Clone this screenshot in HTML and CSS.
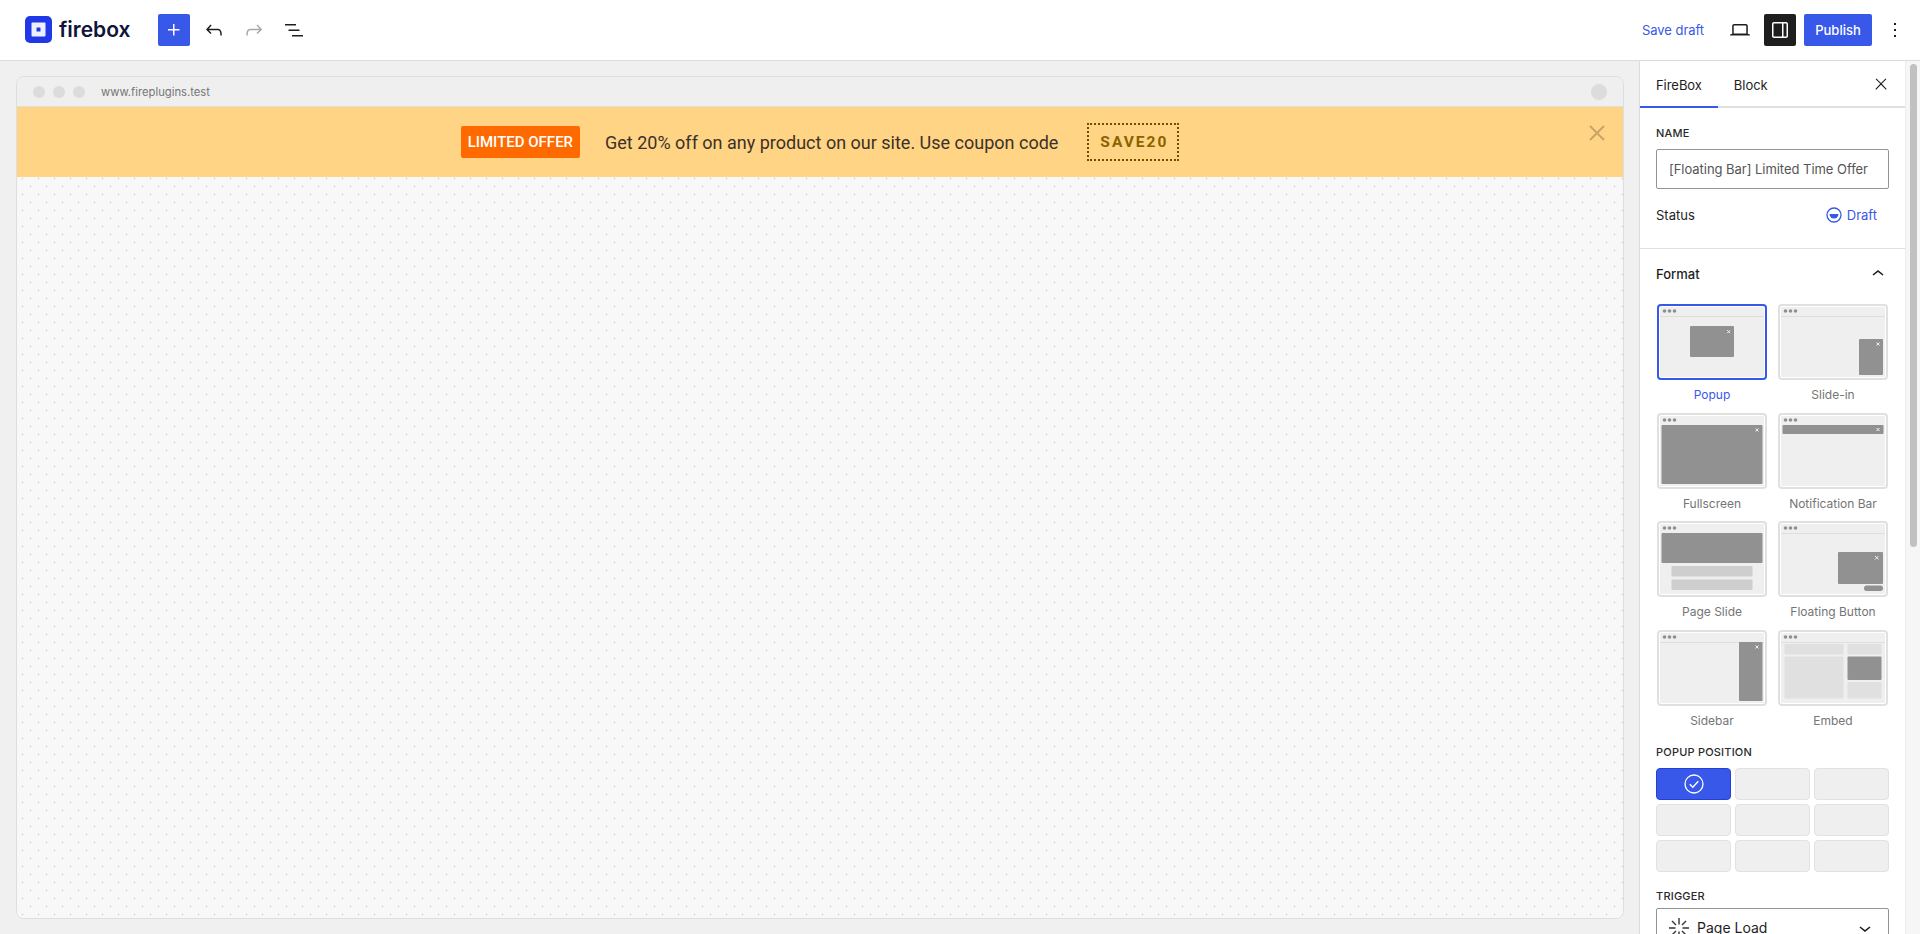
FILE: index.html
```html
<!DOCTYPE html>
<html lang="en">
<head>
<meta charset="utf-8">
<title>FireBox</title>
<link rel="stylesheet" href="styles.css">
</head>
<body>
<header class="topbar">
  <div class="brand">
    <svg class="brand-mark" viewBox="0 0 27 27"><rect width="27" height="27" rx="5" fill="#2138e8"/><rect x="6.500" y="6.500" width="14" height="14" rx="1" fill="#eef0fe"/><rect x="11.500" y="11.500" width="4" height="4" rx=".5" fill="#2138e8"/></svg>
    <span class="brand-name">firebox</span>
  </div>
  <div class="tools">
    <button class="icon-btn primary"><svg viewBox="0 0 24 24"><path d="M11 12.500V17.500H12.500V12.500H17.500V11H12.500V6H11V11H6V12.500H11Z"/></svg></button>
    <button class="icon-btn"><svg viewBox="0 0 24 24"><path d="M18.300 11.700c-.6-.6-1.400-.9-2.300-.9H6.700l2.900-3.300-1.100-1-4.500 5L8.500 16l1-1-2.700-2.700H16c.5 0 .9.200 1.300.5 1 1 1 3.400 1 4.500v.3h1.500v-.2c0-1.500 0-4.300-1.500-5.700z"/></svg></button>
    <button class="icon-btn muted"><svg viewBox="0 0 24 24"><path d="M15.600 6.500l-1.100 1 2.900 3.300H8c-.9 0-1.700.3-2.300.9-1.400 1.500-1.400 4.200-1.400 5.600v.2h1.500v-.3c0-1.100 0-3.500 1-4.500.3-.3.7-.5 1.300-.5h9.200L14.500 15l1.100 1.100 4.600-4.600-4.600-5z"/></svg></button>
    <button class="icon-btn"><svg viewBox="0 0 24 24"><path d="M3 6h11v1.500H3V6Zm3.500 5.500h11V13h-11v-1.500ZM21 17H10v1.500h11V17Z"/></svg></button>
  </div>
  <div class="actions">
    <span class="save-draft">Save draft</span>
    <button class="icon-btn laptop"><svg viewBox="0 0 24 24"><path d="M20.500 16h-.7V8c0-1.100-.9-2-2-2H6.200c-1.100 0-2 .9-2 2v8h-.7c-.8 0-1.500.7-1.500 1.500h20c0-.8-.7-1.500-1.500-1.500zM5.700 8c0-.3.2-.5.5-.5h11.600c.3 0 .5.2.5.5v7.600H5.700V8z"/></svg></button>
    <button class="icon-btn dark"><svg viewBox="0 0 24 24"><path d="M18 4H6c-1.100 0-2 .9-2 2v12c0 1.100.9 2 2 2h12c1.100 0 2-.9 2-2V6c0-1.100-.9-2-2-2zm-4 14.500H6c-.3 0-.5-.2-.5-.5V6c0-.3.2-.5.5-.5h8v13zm4.500-.5c0 .3-.2.5-.5.5h-2.500v-13H18c.3 0 .5.2.5.5v12z"/></svg></button>
    <button class="publish">Publish</button>
    <button class="icon-btn more"><svg viewBox="0 0 24 24"><path d="M13 19h-2v-2h2v2zm0-6h-2v-2h2v2zm0-6h-2V5h2v2z"/></svg></button>
  </div>
</header>

<div class="workspace">
  <main class="stage">
    <section class="frame">
      <div class="chrome">
        <span class="light"></span><span class="light"></span><span class="light"></span>
        <span class="url">www.fireplugins.test</span>
        <span class="light end"></span>
      </div>
      <div class="banner">
        <span class="offer">LIMITED OFFER</span>
        <span class="pitch">Get 20% off on any product on our site. Use coupon code</span>
        <span class="coupon">SAVE20</span>
        <svg class="banner-close" viewBox="0 0 16 16"><path d="M1 1l14 14M15 1L1 15"/></svg>
      </div>
      <div class="canvas"></div>
    </section>
  </main>

  <aside class="sidebar">
    <div class="panel">
      <div class="tabs">
        <span class="tab active">FireBox</span>
        <span class="tab">Block</span>
        <svg class="tab-close" viewBox="0 0 24 24"><path d="M13 11.800l6.100-6.300-1-1-6.100 6.200-6.100-6.200-1 1 6.100 6.300-6.500 6.700 1 1 6.500-6.600 6.500 6.600 1-1z"/></svg>
      </div>

      <div class="section meta">
        <label class="caps">Name</label>
        <div class="field name-field">[Floating Bar] Limited Time Offer</div>
        <div class="status-row">
          <span>Status</span>
          <span class="status"><svg viewBox="0 0 16 16"><circle cx="8" cy="8" r="7" fill="none" stroke="#3858e9" stroke-width="1.300"/><path d="M3.500 7h9a4.500 4.500 0 0 1-9 0Z" fill="#3858e9"/></svg>Draft</span>
        </div>
      </div>

      <div class="section format">
        <div class="section-head">
          <span>Format</span>
          <svg viewBox="0 0 24 24"><path d="M6.500 12.400L12 8l5.500 4.400-.9 1.200L12 10l-4.500 3.600-1-1.200z"/></svg>
        </div>

        <div class="thumbs">
          <figure class="thumb selected">
            <svg viewBox="0 0 110 76"><rect class="frame-line" x="1" y="1" width="108" height="74" rx="3"/><rect class="inner" x="3" y="3" width="104" height="70" rx="1"/><path class="rule" d="M3 12.500h104"/><circle class="dot" cx="7.500" cy="7" r="1.800"/><circle class="dot" cx="12.500" cy="7" r="1.800"/><circle class="dot" cx="17.500" cy="7" r="1.800"/><rect class="block" x="33" y="22" width="44" height="31" rx="1"/><path class="x" d="M70.200 26.200l3 3M73.200 26.200l-3 3"/></svg>
            <figcaption>Popup</figcaption>
          </figure>
          <figure class="thumb">
            <svg viewBox="0 0 110 76"><rect class="frame-line" x="1" y="1" width="108" height="74" rx="3"/><rect class="inner" x="3" y="3" width="104" height="70" rx="1"/><path class="rule" d="M3 12.500h104"/><circle class="dot" cx="7.500" cy="7" r="1.800"/><circle class="dot" cx="12.500" cy="7" r="1.800"/><circle class="dot" cx="17.500" cy="7" r="1.800"/><rect class="block" x="81" y="35" width="24" height="36" rx="1"/><path class="x" d="M98.500 38.500l3 3M101.500 38.500l-3 3"/></svg>
            <figcaption>Slide-in</figcaption>
          </figure>
          <figure class="thumb">
            <svg viewBox="0 0 110 76"><rect class="frame-line" x="1" y="1" width="108" height="74" rx="3"/><rect class="inner" x="3" y="3" width="104" height="70" rx="1"/><circle class="dot" cx="7.500" cy="7" r="1.800"/><circle class="dot" cx="12.500" cy="7" r="1.800"/><circle class="dot" cx="17.500" cy="7" r="1.800"/><rect class="block" x="4.500" y="12" width="101" height="59" rx="1"/><path class="x" d="M98.500 15.500l3 3M101.500 15.500l-3 3"/></svg>
            <figcaption>Fullscreen</figcaption>
          </figure>
          <figure class="thumb">
            <svg viewBox="0 0 110 76"><rect class="frame-line" x="1" y="1" width="108" height="74" rx="3"/><rect class="inner" x="3" y="3" width="104" height="70" rx="1"/><circle class="dot" cx="7.500" cy="7" r="1.800"/><circle class="dot" cx="12.500" cy="7" r="1.800"/><circle class="dot" cx="17.500" cy="7" r="1.800"/><rect class="block" x="4.500" y="12" width="101" height="9" rx="1"/><path class="x" d="M98.500 15l3 3M101.500 15l-3 3"/></svg>
            <figcaption>Notification Bar</figcaption>
          </figure>
          <figure class="thumb">
            <svg viewBox="0 0 110 76"><rect class="frame-line" x="1" y="1" width="108" height="74" rx="3"/><rect class="inner" x="3" y="3" width="104" height="70" rx="1"/><circle class="dot" cx="7.500" cy="7" r="1.800"/><circle class="dot" cx="12.500" cy="7" r="1.800"/><circle class="dot" cx="17.500" cy="7" r="1.800"/><rect class="block" x="4.500" y="12" width="101" height="30" rx="1"/><rect class="soft" x="14.500" y="45" width="81" height="10.500" rx="1"/><rect class="soft" x="14.500" y="58.500" width="81" height="10.500" rx="1"/></svg>
            <figcaption>Page Slide</figcaption>
          </figure>
          <figure class="thumb">
            <svg viewBox="0 0 110 76"><rect class="frame-line" x="1" y="1" width="108" height="74" rx="3"/><rect class="inner" x="3" y="3" width="104" height="70" rx="1"/><path class="rule" d="M3 12.500h104"/><circle class="dot" cx="7.500" cy="7" r="1.800"/><circle class="dot" cx="12.500" cy="7" r="1.800"/><circle class="dot" cx="17.500" cy="7" r="1.800"/><rect class="block" x="60" y="31" width="45" height="32" rx="1"/><path class="x" d="M97 35l3.500 3.500M100.500 35L97 38.500"/><rect class="block" x="86" y="64.500" width="19" height="5.500" rx="2.700"/></svg>
            <figcaption>Floating Button</figcaption>
          </figure>
          <figure class="thumb">
            <svg viewBox="0 0 110 76"><rect class="frame-line" x="1" y="1" width="108" height="74" rx="3"/><rect class="inner" x="3" y="3" width="104" height="70" rx="1"/><path class="rule" d="M3 12.500h104"/><circle class="dot" cx="7.500" cy="7" r="1.800"/><circle class="dot" cx="12.500" cy="7" r="1.800"/><circle class="dot" cx="17.500" cy="7" r="1.800"/><rect class="block" x="82" y="12" width="23.500" height="59" rx="1"/><path class="x" d="M98.500 15.500l3 3M101.500 15.500l-3 3"/></svg>
            <figcaption>Sidebar</figcaption>
          </figure>
          <figure class="thumb">
            <svg viewBox="0 0 110 76"><rect class="frame-line" x="1" y="1" width="108" height="74" rx="3"/><rect class="inner" x="3" y="3" width="104" height="70" rx="1"/><path class="rule" d="M3 12.500h104"/><circle class="dot" cx="7.500" cy="7" r="1.800"/><circle class="dot" cx="12.500" cy="7" r="1.800"/><circle class="dot" cx="17.500" cy="7" r="1.800"/><rect class="pale" x="6.500" y="14" width="59" height="10.500" rx="1"/><rect class="pale" x="69.500" y="14" width="34" height="10.500" rx="1"/><rect class="pale" x="6.500" y="26.500" width="59" height="42" rx="1"/><rect class="block" x="69.500" y="26.500" width="34" height="23.500" rx="1"/><rect class="pale" x="69.500" y="52" width="34" height="16.500" rx="1"/></svg>
            <figcaption>Embed</figcaption>
          </figure>
        </div>

        <label class="caps position-label">Popup Position</label>
        <div class="positions">
          <span class="cell on"><svg viewBox="0 0 20 20"><circle cx="10" cy="10" r="9" fill="none" stroke="#fff" stroke-width="1.300"/><path d="M5.800 10.300l3 3 5.500-6" fill="none" stroke="#fff" stroke-width="1.400"/></svg></span>
          <span class="cell"></span><span class="cell"></span>
          <span class="cell"></span><span class="cell"></span><span class="cell"></span>
          <span class="cell"></span><span class="cell"></span><span class="cell"></span>
        </div>

        <label class="caps trigger-label">Trigger</label>
        <div class="field select">
          <svg class="spinner" viewBox="0 0 20 20"><path d="M10 0v6.500M10 13.500V20M0 10h6.500M13.500 10H20M3 3l4 4M17 3l-4 4M3 17l4-4M17 17l-4-4"/></svg>
          <span class="select-value">Page Load</span>
          <svg class="chev" viewBox="0 0 24 24"><path d="M17.500 11.600L12 16l-5.500-4.400.9-1.200L12 14l4.500-3.600 1 1.200z"/></svg>
        </div>
      </div>
    </div>
    <div class="scrollbar"><div class="scroll-thumb"></div></div>
  </aside>
</div>
</body>
</html>
```
FILE: styles.css
```css
* { box-sizing: border-box; }
html, body { height: 100%; }
body {
  margin: 0;
  height: 934px;
  overflow: hidden;
  display: flex;
  flex-direction: column;
  background: #fff;
  color: #1e1e1e;
  font-family: Inter, "Liberation Sans", sans-serif;
  font-size: 13px;
}
button { border: 0; padding: 0; background: none; font: inherit; }

/* Top bar */
.topbar {
  flex: 0 0 61px;
  display: flex;
  align-items: center;
  padding: 0 9px 1px 25px;
  background: #fff;
  border-bottom: 1px solid #dcdcdc;
}
.brand { display: flex; align-items: center; gap: 7px; width: 133px; }
.brand-mark { width: 27px; height: 27px; display: block; }
.brand-name { font-size: 21px; font-weight: 600; color: #11143a; }
.tools { display: flex; gap: 8px; }
.icon-btn {
  width: 32px; height: 32px;
  display: flex; align-items: center; justify-content: center;
  border-radius: 2px;
}
.icon-btn svg { width: 24px; height: 24px; fill: #1e1e1e; display: block; }
.icon-btn.primary { background: #3858e9; }
.icon-btn.primary svg { fill: #fff; }
.icon-btn.muted svg { fill: #a9a9a9; }
.icon-btn.dark { background: #1e1e1e; }
.icon-btn.dark svg { fill: #fff; }
.actions { margin-left: auto; display: flex; align-items: center; }
.save-draft { color: #3858e9; margin-right: 20px; letter-spacing: -0.05px; }
.laptop { margin-right: 8px; }
.publish {
  width: 68px; height: 32px;
  margin-left: 8px;
  background: #3858e9; color: #fff;
  border-radius: 2px;
  font-weight: 500;
}
.more { margin-left: 7px; }

/* Workspace */
.workspace { flex: 1; min-height: 0; display: flex; }
.stage {
  flex: 1;
  min-width: 0;
  display: flex;
  padding: 15px 15px 15px 16px;
  background: #f0f0f0;
}
.frame {
  flex: 1;
  display: flex;
  flex-direction: column;
  border: 1px solid #dedede;
  border-radius: 8px;
  overflow: hidden;
  background: #f8f8f8;
}
.chrome {
  flex: 0 0 30px;
  display: flex;
  align-items: center;
  gap: 8px;
  padding: 0 16px 0 16px;
  background: #efefef;
  border-bottom: 1px solid #dedede;
}
.light { width: 12px; height: 12px; border-radius: 50%; background: #dcdcdc; }
.light.end { width: 16px; height: 16px; margin-left: auto; }
.url { margin-left: 8px; font-size: 11.250px; color: #757575; }

.banner {
  position: relative;
  flex: 0 0 70px;
  display: flex;
  align-items: center;
  justify-content: center;
  background: #ffd485;
  font-family: Roboto, "Liberation Sans", sans-serif;
}
.offer {
  height: 32px;
  padding: 0 7px;
  display: flex;
  align-items: center;
  background: #ff6a00;
  border-radius: 2px;
  color: #fff;
  font-size: 15px;
  font-weight: 500;
}
.pitch { margin-left: 25px; color: #3c3128; font-size: 18px; }
.coupon {
  margin-left: 29px;
  height: 38px;
  padding: 0 9px 0 11px;
  display: flex;
  align-items: center;
  border: 2px dotted #6e4f00;
  color: #8a6200;
  font-size: 15.500px;
  font-weight: 700;
  letter-spacing: 2px;
}
.banner-close {
  position: absolute;
  right: 18px;
  top: 18px;
  width: 16px;
  height: 16px;
  fill: none;
  stroke: #c8a468;
  stroke-width: 2;
}
.canvas {
  flex: 1;
  background-color: #f8f8f8;
  background-image:
    radial-gradient(circle at 5.500px 1.500px, #cfcfcf .7px, transparent 1.100px),
    radial-gradient(circle at 13.500px 9.500px, #cfcfcf .7px, transparent 1.100px);
  background-size: 16px 16px;
}

/* Sidebar */
.sidebar {
  flex: 0 0 281px;
  display: flex;
  background: #fff;
  border-left: 1px solid #dcdcdc;
}
.panel { flex: 1; min-width: 0; overflow: hidden; }
.scrollbar {
  flex: 0 0 15px;
  padding: 3px 3px 0 4px;
  background: #f6f6f6;
  border-left: 1px solid #ededed;
}
.scroll-thumb { height: 483px; border-radius: 4px; background: #c1c1c1; }

.tabs {
  position: relative;
  height: 47px;
  display: flex;
  border-bottom: 2px solid #e0e0e0;
}
.tab {
  height: 47px;
  display: flex;
  align-items: center;
  padding: 0 16px;
  color: #1e1e1e;
  letter-spacing: -0.05px;
}
.tab.active { box-shadow: inset 0 -2px 0 #3858e9; }
.tab-close {
  position: absolute;
  right: 15px;
  top: 14px;
  width: 18px;
  height: 18px;
  fill: #1e1e1e;
}

.section { padding: 0 16px; border-bottom: 1px solid #e0e0e0; }
.caps {
  display: block;
  font-size: 11px;
  font-weight: 500;
  line-height: 14px;
  letter-spacing: 0.2px;
  text-transform: uppercase;
  color: #2b2b2b;
}
.meta { padding-top: 18px; height: 141px; }
.field {
  border: 1px solid #949494;
  border-radius: 2px;
  height: 40px;
  display: flex;
  align-items: center;
}
.name-field {
  margin-top: 9px;
  padding-left: 12px;
  color: #555;
  white-space: nowrap;
  letter-spacing: -0.04px;
}
.status-row {
  margin-top: 16px;
  padding-right: 12px;
  height: 20px;
  display: flex;
  align-items: center;
  justify-content: space-between;
}
.status { display: flex; align-items: center; gap: 5px; color: #3858e9; }
.status svg { width: 16px; height: 16px; }

.format { border-bottom: 0; }
.section-head {
  height: 20px;
  margin-top: 15px;
  display: flex;
  align-items: center;
  justify-content: space-between;
  font-weight: 500;
}
.section-head svg { width: 24px; height: 24px; fill: #1e1e1e; margin-right: -1px; }

.thumbs {
  margin: 20px 0 0 1px;
  width: 231px;
  display: grid;
  grid-template-columns: 110px 110px;
  column-gap: 11px;
  row-gap: 0;
}
.thumb { margin: 0; height: 108.500px; }
.thumb svg { display: block; width: 110px; height: 76px; }
.thumb figcaption {
  margin-top: 7px;
  text-align: center;
  font-size: 12px;
  line-height: 16px;
  color: #757575;
}
.thumb.selected figcaption { color: #3858e9; }
.frame-line { fill: #fff; stroke: #e0e0e0; stroke-width: 2; }
.thumb.selected .frame-line { stroke: #3858e9; }
.inner { fill: #efefef; }
.rule { stroke: #dedede; stroke-width: 1; fill: none; }
.dot { fill: #8f8f8f; }
.block { fill: #919191; }
.soft { fill: #cecece; }
.pale { fill: #e0e0e0; }
.x { stroke: #f0f0f0; stroke-width: 1; fill: none; }

.position-label { margin-top: 7px; }
.positions {
  margin-top: 9px;
  display: grid;
  grid-template-columns: repeat(3, 75px);
  grid-auto-rows: 32px;
  gap: 4px;
}
.cell {
  display: flex;
  align-items: center;
  justify-content: center;
  background: #efefef;
  border: 1px solid #e2e2e2;
  border-radius: 4px;
}
.cell.on { background: #3858e9; border-color: #2440d8; }
.cell svg { width: 20px; height: 20px; }

.trigger-label { margin-top: 17px; }
.select { margin-top: 5px; padding: 0 12px; gap: 8px; height: 40px; font-size: 14px; }
.select-value { line-height: 14px; }
.spinner { width: 20px; height: 20px; stroke: #333; stroke-width: 1.400; fill: none; flex: none; }
.chev { width: 24px; height: 24px; fill: #1e1e1e; margin-left: auto; margin-right: -1px; }
```
